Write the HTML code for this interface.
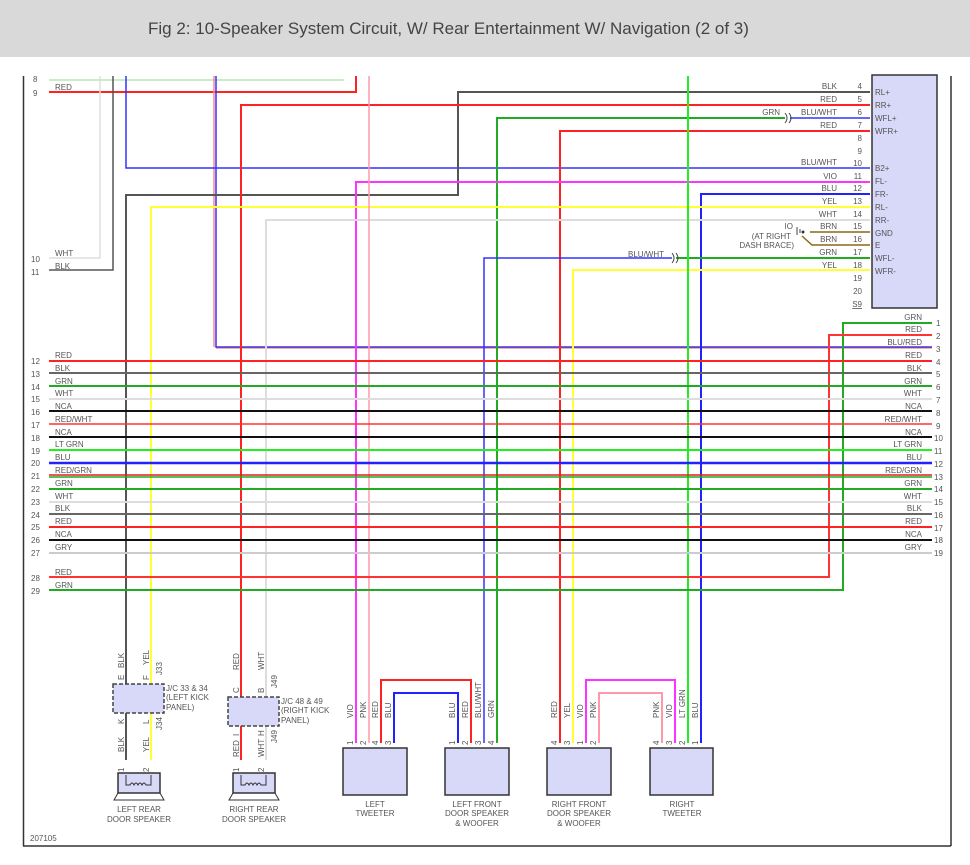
<!DOCTYPE html>
<html><head><meta charset="utf-8"><style>
html,body{margin:0;padding:0;background:#fff;width:970px;height:865px;overflow:hidden}
svg{display:block}
text{font-family:"Liberation Sans",sans-serif;fill:#555;font-size:8px}
.t{font-size:17px;fill:#444}
.r{text-anchor:end}
.c{text-anchor:middle}
</style></head><body>
<svg width="970" height="865" viewBox="0 0 970 865" xmlns="http://www.w3.org/2000/svg">
<rect x="0" y="0" width="970" height="57" fill="#d9d9d9"/>
<text class="t" x="148" y="34">Fig 2: 10-Speaker System Circuit, W/ Rear Entertainment W/ Navigation (2 of 3)</text>
<g fill="none" stroke-width="1.5">
<!-- frame -->
<line x1="23.5" y1="76" x2="23.5" y2="846" stroke="#333"/>
<line x1="23" y1="846" x2="951" y2="846" stroke="#333"/>
<line x1="951" y1="76" x2="951" y2="846" stroke="#333"/>
<!-- left top wires -->
<line x1="49" y1="80" x2="344" y2="80" stroke="#b8e8b0"/>
<polyline points="49,92 356,92 356,76" stroke="#f22" stroke-width="2"/>
<polyline points="49,258 100,258 100,76" stroke="#ddd"/>
<polyline points="49,270 113,270 113,76" stroke="#555"/>
<!-- BLU/RED -->
<polyline points="214,76 214,347" stroke="#f88"/>
<polyline points="216,76 216,347 932,347" stroke="#33f"/>
<line x1="216" y1="348" x2="932" y2="348" stroke="#c33" stroke-width="0.8"/>
<!-- connector wires -->
<polyline points="126,76 126,168 870,168" stroke="#33f"/>
<polyline points="126,760 126,195 458,195 458,92 870,92" stroke="#555" stroke-width="2"/>
<polyline points="241,760 241,105 870,105" stroke="#f22" stroke-width="2"/>
<polyline points="497,743 497,118 785,118" stroke="#2a2" stroke-width="2"/>
<line x1="790" y1="118" x2="870" y2="118" stroke="#33f"/>
<polyline points="560,743 560,131 870,131" stroke="#f22" stroke-width="2"/>
<polyline points="356,743 356,182 870,182" stroke="#f3f" stroke-width="2"/>
<polyline points="701,743 701,194 870,194" stroke="#22f" stroke-width="2"/>
<polyline points="151,760 151,207 870,207" stroke="#ff3" stroke-width="2"/>
<polyline points="266,760 266,220 870,220" stroke="#ddd" stroke-width="2"/>
<polyline points="484,743 484,258 672,258" stroke="#33f"/>
<line x1="676" y1="258" x2="870" y2="258" stroke="#2a2" stroke-width="2"/>
<polyline points="573,743 573,270 870,270" stroke="#ff3" stroke-width="2"/>
<line x1="688" y1="76" x2="688" y2="743" stroke="#2e2" stroke-width="2"/>
<line x1="369" y1="76" x2="369" y2="743" stroke="#f9a"/>
<line x1="810" y1="232" x2="870" y2="232" stroke="#8b6914"/>
<polyline points="802,236 812,245 870,245" stroke="#8b6914"/>
<path d="M785,113 q4,5 0,10 M789,113 q4,5 0,10 M672,253 q4,5 0,10 M676,253 q4,5 0,10" stroke="#444" stroke-width="1"/>
<path d="M797,227 v8 M800,229 v4" stroke="#444" stroke-width="1"/>
<circle cx="803" cy="232" r="1.5" fill="#333"/>
<!-- right wires 1,2 -->
<polyline points="932,323 843,323 843,590 49,590" stroke="#2a2" stroke-width="2"/>
<polyline points="932,335 829,335 829,577 49,577" stroke="#f33" stroke-width="2"/>
<!-- bundle -->
<line x1="49" y1="361" x2="932" y2="361" stroke="#f22" stroke-width="2"/>
<line x1="49" y1="373" x2="932" y2="373" stroke="#666" stroke-width="2"/>
<line x1="49" y1="386" x2="932" y2="386" stroke="#2a2" stroke-width="2"/>
<line x1="49" y1="399" x2="932" y2="399" stroke="#ddd" stroke-width="2"/>
<line x1="49" y1="411" x2="932" y2="411" stroke="#111" stroke-width="2"/>
<line x1="49" y1="424" x2="932" y2="424" stroke="#f33"/>
<line x1="49" y1="437" x2="932" y2="437" stroke="#111" stroke-width="2"/>
<line x1="49" y1="450" x2="932" y2="450" stroke="#2e2" stroke-width="2"/>
<line x1="49" y1="463" x2="932" y2="463" stroke="#22f" stroke-width="2.5"/>
<line x1="49" y1="475" x2="932" y2="475" stroke="#d22"/>
<line x1="49" y1="477" x2="932" y2="477" stroke="#2a2"/>
<line x1="49" y1="489" x2="932" y2="489" stroke="#2a2" stroke-width="2"/>
<line x1="49" y1="502" x2="932" y2="502" stroke="#ddd" stroke-width="2"/>
<line x1="49" y1="514" x2="932" y2="514" stroke="#666" stroke-width="2"/>
<line x1="49" y1="527" x2="932" y2="527" stroke="#f22" stroke-width="2"/>
<line x1="49" y1="540" x2="932" y2="540" stroke="#111" stroke-width="2"/>
<line x1="49" y1="553" x2="932" y2="553" stroke="#ccc" stroke-width="2"/>
<!-- speaker loops -->
<polyline points="381,743 381,680 471,680 471,743" stroke="#f22" stroke-width="2"/>
<polyline points="394,743 394,693 458,693 458,743" stroke="#22f" stroke-width="2"/>
<polyline points="586,743 586,680 675,680 675,743" stroke="#f3f" stroke-width="2"/>
<polyline points="599,743 599,693 662,693 662,743" stroke="#f9a" stroke-width="2"/>
</g>
<!-- connector box -->
<rect x="872" y="75" width="65" height="233" fill="#d8d8f8" stroke="#333" stroke-width="1.5"/>
<g>
<text x="875" y="95">RL+</text><text x="875" y="108">RR+</text><text x="875" y="121">WFL+</text><text x="875" y="134">WFR+</text>
<text x="875" y="171">B2+</text><text x="875" y="184">FL-</text><text x="875" y="197">FR-</text><text x="875" y="210">RL-</text><text x="875" y="223">RR-</text>
<text x="875" y="236">GND</text><text x="875" y="248">E</text><text x="875" y="261">WFL-</text><text x="875" y="274">WFR-</text>
</g>
<g class="r">
<text class="r" x="862" y="89">4</text><text class="r" x="862" y="102">5</text><text class="r" x="862" y="115">6</text><text class="r" x="862" y="128">7</text><text class="r" x="862" y="141">8</text><text class="r" x="862" y="154">9</text><text class="r" x="862" y="166">10</text><text class="r" x="862" y="179">11</text><text class="r" x="862" y="191">12</text><text class="r" x="862" y="204">13</text><text class="r" x="862" y="217">14</text><text class="r" x="862" y="229">15</text><text class="r" x="862" y="242">16</text><text class="r" x="862" y="255">17</text><text class="r" x="862" y="268">18</text><text class="r" x="862" y="281">19</text><text class="r" x="862" y="294">20</text><text class="r" x="862" y="307" text-decoration="underline">S9</text>
<text class="r" x="837" y="89">BLK</text><text class="r" x="837" y="102">RED</text><text class="r" x="837" y="115">BLU/WHT</text><text class="r" x="780" y="115">GRN</text><text class="r" x="837" y="128">RED</text>
<text class="r" x="837" y="165">BLU/WHT</text><text class="r" x="837" y="179">VIO</text><text class="r" x="837" y="191">BLU</text><text class="r" x="837" y="204">YEL</text><text class="r" x="837" y="217">WHT</text><text class="r" x="837" y="229">BRN</text><text class="r" x="837" y="242">BRN</text><text class="r" x="837" y="255">GRN</text><text class="r" x="837" y="268">YEL</text>
<text class="r" x="664" y="257">BLU/WHT</text><text class="r" x="793" y="229">IO</text><text class="r" x="791" y="239">(AT RIGHT</text><text class="r" x="794" y="248">DASH BRACE)</text>
<text class="r" x="922" y="320">GRN</text><text class="r" x="922" y="332">RED</text><text class="r" x="922" y="345">BLU/RED</text><text class="r" x="922" y="358">RED</text><text class="r" x="922" y="371">BLK</text><text class="r" x="922" y="384">GRN</text><text class="r" x="922" y="396">WHT</text><text class="r" x="922" y="409">NCA</text><text class="r" x="922" y="422">RED/WHT</text><text class="r" x="922" y="435">NCA</text><text class="r" x="922" y="447">LT GRN</text><text class="r" x="922" y="460">BLU</text><text class="r" x="922" y="473">RED/GRN</text><text class="r" x="922" y="486">GRN</text><text class="r" x="922" y="499">WHT</text><text class="r" x="922" y="511">BLK</text><text class="r" x="922" y="524">RED</text><text class="r" x="922" y="537">NCA</text><text class="r" x="922" y="550">GRY</text>
</g>
<g>
<text x="936" y="326">1</text><text x="936" y="339">2</text><text x="936" y="352">3</text><text x="936" y="365">4</text><text x="936" y="377">5</text><text x="936" y="390">6</text><text x="936" y="403">7</text><text x="936" y="416">8</text><text x="936" y="429">9</text><text x="934" y="441">10</text><text x="934" y="454">11</text><text x="934" y="467">12</text><text x="934" y="480">13</text><text x="934" y="492">14</text><text x="934" y="505">15</text><text x="934" y="518">16</text><text x="934" y="531">17</text><text x="934" y="543">18</text><text x="934" y="556">19</text>
<text x="33" y="82">8</text><text x="33" y="96">9</text><text x="55" y="90">RED</text>
<text x="31" y="262">10</text><text x="55" y="256">WHT</text><text x="31" y="275">11</text><text x="55" y="269">BLK</text>
<text x="31" y="364">12</text><text x="55" y="358">RED</text>
<text x="31" y="377">13</text><text x="55" y="371">BLK</text>
<text x="31" y="390">14</text><text x="55" y="384">GRN</text>
<text x="31" y="402">15</text><text x="55" y="396">WHT</text>
<text x="31" y="415">16</text><text x="55" y="409">NCA</text>
<text x="31" y="428">17</text><text x="55" y="422">RED/WHT</text>
<text x="31" y="441">18</text><text x="55" y="435">NCA</text>
<text x="31" y="454">19</text><text x="55" y="447">LT GRN</text>
<text x="31" y="466">20</text><text x="55" y="460">BLU</text>
<text x="31" y="479">21</text><text x="55" y="473">RED/GRN</text>
<text x="31" y="492">22</text><text x="55" y="486">GRN</text>
<text x="31" y="505">23</text><text x="55" y="499">WHT</text>
<text x="31" y="518">24</text><text x="55" y="511">BLK</text>
<text x="31" y="530">25</text><text x="55" y="524">RED</text>
<text x="31" y="543">26</text><text x="55" y="537">NCA</text>
<text x="31" y="556">27</text><text x="55" y="550">GRY</text>
<text x="31" y="581">28</text><text x="55" y="575">RED</text>
<text x="31" y="594">29</text><text x="55" y="588">GRN</text>
<text x="30" y="841">207105</text>
</g>
<!-- J/C boxes -->
<rect x="113" y="684" width="51" height="29" fill="#d8d8f8" stroke="#444" stroke-dasharray="4,2" stroke-width="1.5"/>
<rect x="228" y="697" width="51" height="29" fill="#d8d8f8" stroke="#444" stroke-dasharray="4,2" stroke-width="1.5"/>
<text x="166" y="691">J/C 33 &amp; 34</text><text x="166" y="700">(LEFT KICK</text><text x="166" y="710">PANEL)</text>
<text x="281" y="704">J/C 48 &amp; 49</text><text x="281" y="713">(RIGHT KICK</text><text x="281" y="723">PANEL)</text>
<!-- rear speakers -->
<rect x="118" y="773" width="42" height="20" fill="#d8d8f8" stroke="#333" stroke-width="1.5"/>
<rect x="233" y="773" width="42" height="20" fill="#d8d8f8" stroke="#333" stroke-width="1.5"/>
<path d="M118,793 l-4,7 h50 l-4,-7 M233,793 l-4,7 h50 l-4,-7" fill="none" stroke="#333"/>
<path d="M126,775 v10 h4 q2,-4 4,0 q2,-4 4,0 q2,-4 4,0 q2,-4 4,0 h5 v-10 M241,775 v10 h4 q2,-4 4,0 q2,-4 4,0 q2,-4 4,0 q2,-4 4,0 h5 v-10" fill="none" stroke="#333"/>
<text class="c" x="139" y="812">LEFT REAR</text><text class="c" x="139" y="822">DOOR SPEAKER</text>
<text class="c" x="254" y="812">RIGHT REAR</text><text class="c" x="254" y="822">DOOR SPEAKER</text>
<g font-size="8">
<text transform="translate(124,668) rotate(-90)">BLK</text><text transform="translate(124,680) rotate(-90)">E</text>
<text transform="translate(149,665) rotate(-90)">YEL</text><text transform="translate(149,680) rotate(-90)">F</text><text transform="translate(162,675) rotate(-90)">J33</text>
<text transform="translate(124,724) rotate(-90)">K</text><text transform="translate(124,752) rotate(-90)">BLK</text><text transform="translate(124,772) rotate(-90)">1</text>
<text transform="translate(149,724) rotate(-90)">L</text><text transform="translate(149,752) rotate(-90)">YEL</text><text transform="translate(149,772) rotate(-90)">2</text><text transform="translate(162,730) rotate(-90)">J34</text>
<text transform="translate(239,670) rotate(-90)">RED</text><text transform="translate(239,693) rotate(-90)">C</text>
<text transform="translate(264,670) rotate(-90)">WHT</text><text transform="translate(264,693) rotate(-90)">B</text><text transform="translate(277,688) rotate(-90)">J49</text>
<text transform="translate(239,736) rotate(-90)">I</text><text transform="translate(239,757) rotate(-90)">RED</text><text transform="translate(239,772) rotate(-90)">1</text>
<text transform="translate(264,736) rotate(-90)">H</text><text transform="translate(264,757) rotate(-90)">WHT</text><text transform="translate(264,772) rotate(-90)">2</text><text transform="translate(277,743) rotate(-90)">J49</text>
</g>
<!-- front speakers -->
<rect x="343" y="748" width="64" height="47" fill="#d8d8f8" stroke="#333" stroke-width="1.5"/>
<rect x="445" y="748" width="64" height="47" fill="#d8d8f8" stroke="#333" stroke-width="1.5"/>
<rect x="547" y="748" width="64" height="47" fill="#d8d8f8" stroke="#333" stroke-width="1.5"/>
<rect x="650" y="748" width="63" height="47" fill="#d8d8f8" stroke="#333" stroke-width="1.5"/>
<text class="c" x="375" y="807">LEFT</text><text class="c" x="375" y="816">TWEETER</text>
<text class="c" x="477" y="807">LEFT FRONT</text><text class="c" x="477" y="816">DOOR SPEAKER</text><text class="c" x="477" y="826">&amp; WOOFER</text>
<text class="c" x="579" y="807">RIGHT FRONT</text><text class="c" x="579" y="816">DOOR SPEAKER</text><text class="c" x="579" y="826">&amp; WOOFER</text>
<text class="c" x="682" y="807">RIGHT</text><text class="c" x="682" y="816">TWEETER</text>
<g>
<text transform="translate(353,718) rotate(-90)">VIO</text><text transform="translate(366,718) rotate(-90)">PNK</text><text transform="translate(378,718) rotate(-90)">RED</text><text transform="translate(391,718) rotate(-90)">BLU</text>
<text transform="translate(455,718) rotate(-90)">BLU</text><text transform="translate(468,718) rotate(-90)">RED</text><text transform="translate(481,718) rotate(-90)">BLU/WHT</text><text transform="translate(494,718) rotate(-90)">GRN</text>
<text transform="translate(557,718) rotate(-90)">RED</text><text transform="translate(570,718) rotate(-90)">YEL</text><text transform="translate(583,718) rotate(-90)">VIO</text><text transform="translate(596,718) rotate(-90)">PNK</text>
<text transform="translate(659,718) rotate(-90)">PNK</text><text transform="translate(672,718) rotate(-90)">VIO</text><text transform="translate(685,718) rotate(-90)">LT GRN</text><text transform="translate(698,718) rotate(-90)">BLU</text>
<text transform="translate(353,745) rotate(-90)">1</text><text transform="translate(366,745) rotate(-90)">2</text><text transform="translate(378,745) rotate(-90)">4</text><text transform="translate(391,745) rotate(-90)">3</text>
<text transform="translate(455,745) rotate(-90)">1</text><text transform="translate(468,745) rotate(-90)">2</text><text transform="translate(481,745) rotate(-90)">3</text><text transform="translate(494,745) rotate(-90)">4</text>
<text transform="translate(557,745) rotate(-90)">4</text><text transform="translate(570,745) rotate(-90)">3</text><text transform="translate(583,745) rotate(-90)">1</text><text transform="translate(596,745) rotate(-90)">2</text>
<text transform="translate(659,745) rotate(-90)">4</text><text transform="translate(672,745) rotate(-90)">3</text><text transform="translate(685,745) rotate(-90)">2</text><text transform="translate(698,745) rotate(-90)">1</text>
</g>
</svg>
</body></html>
